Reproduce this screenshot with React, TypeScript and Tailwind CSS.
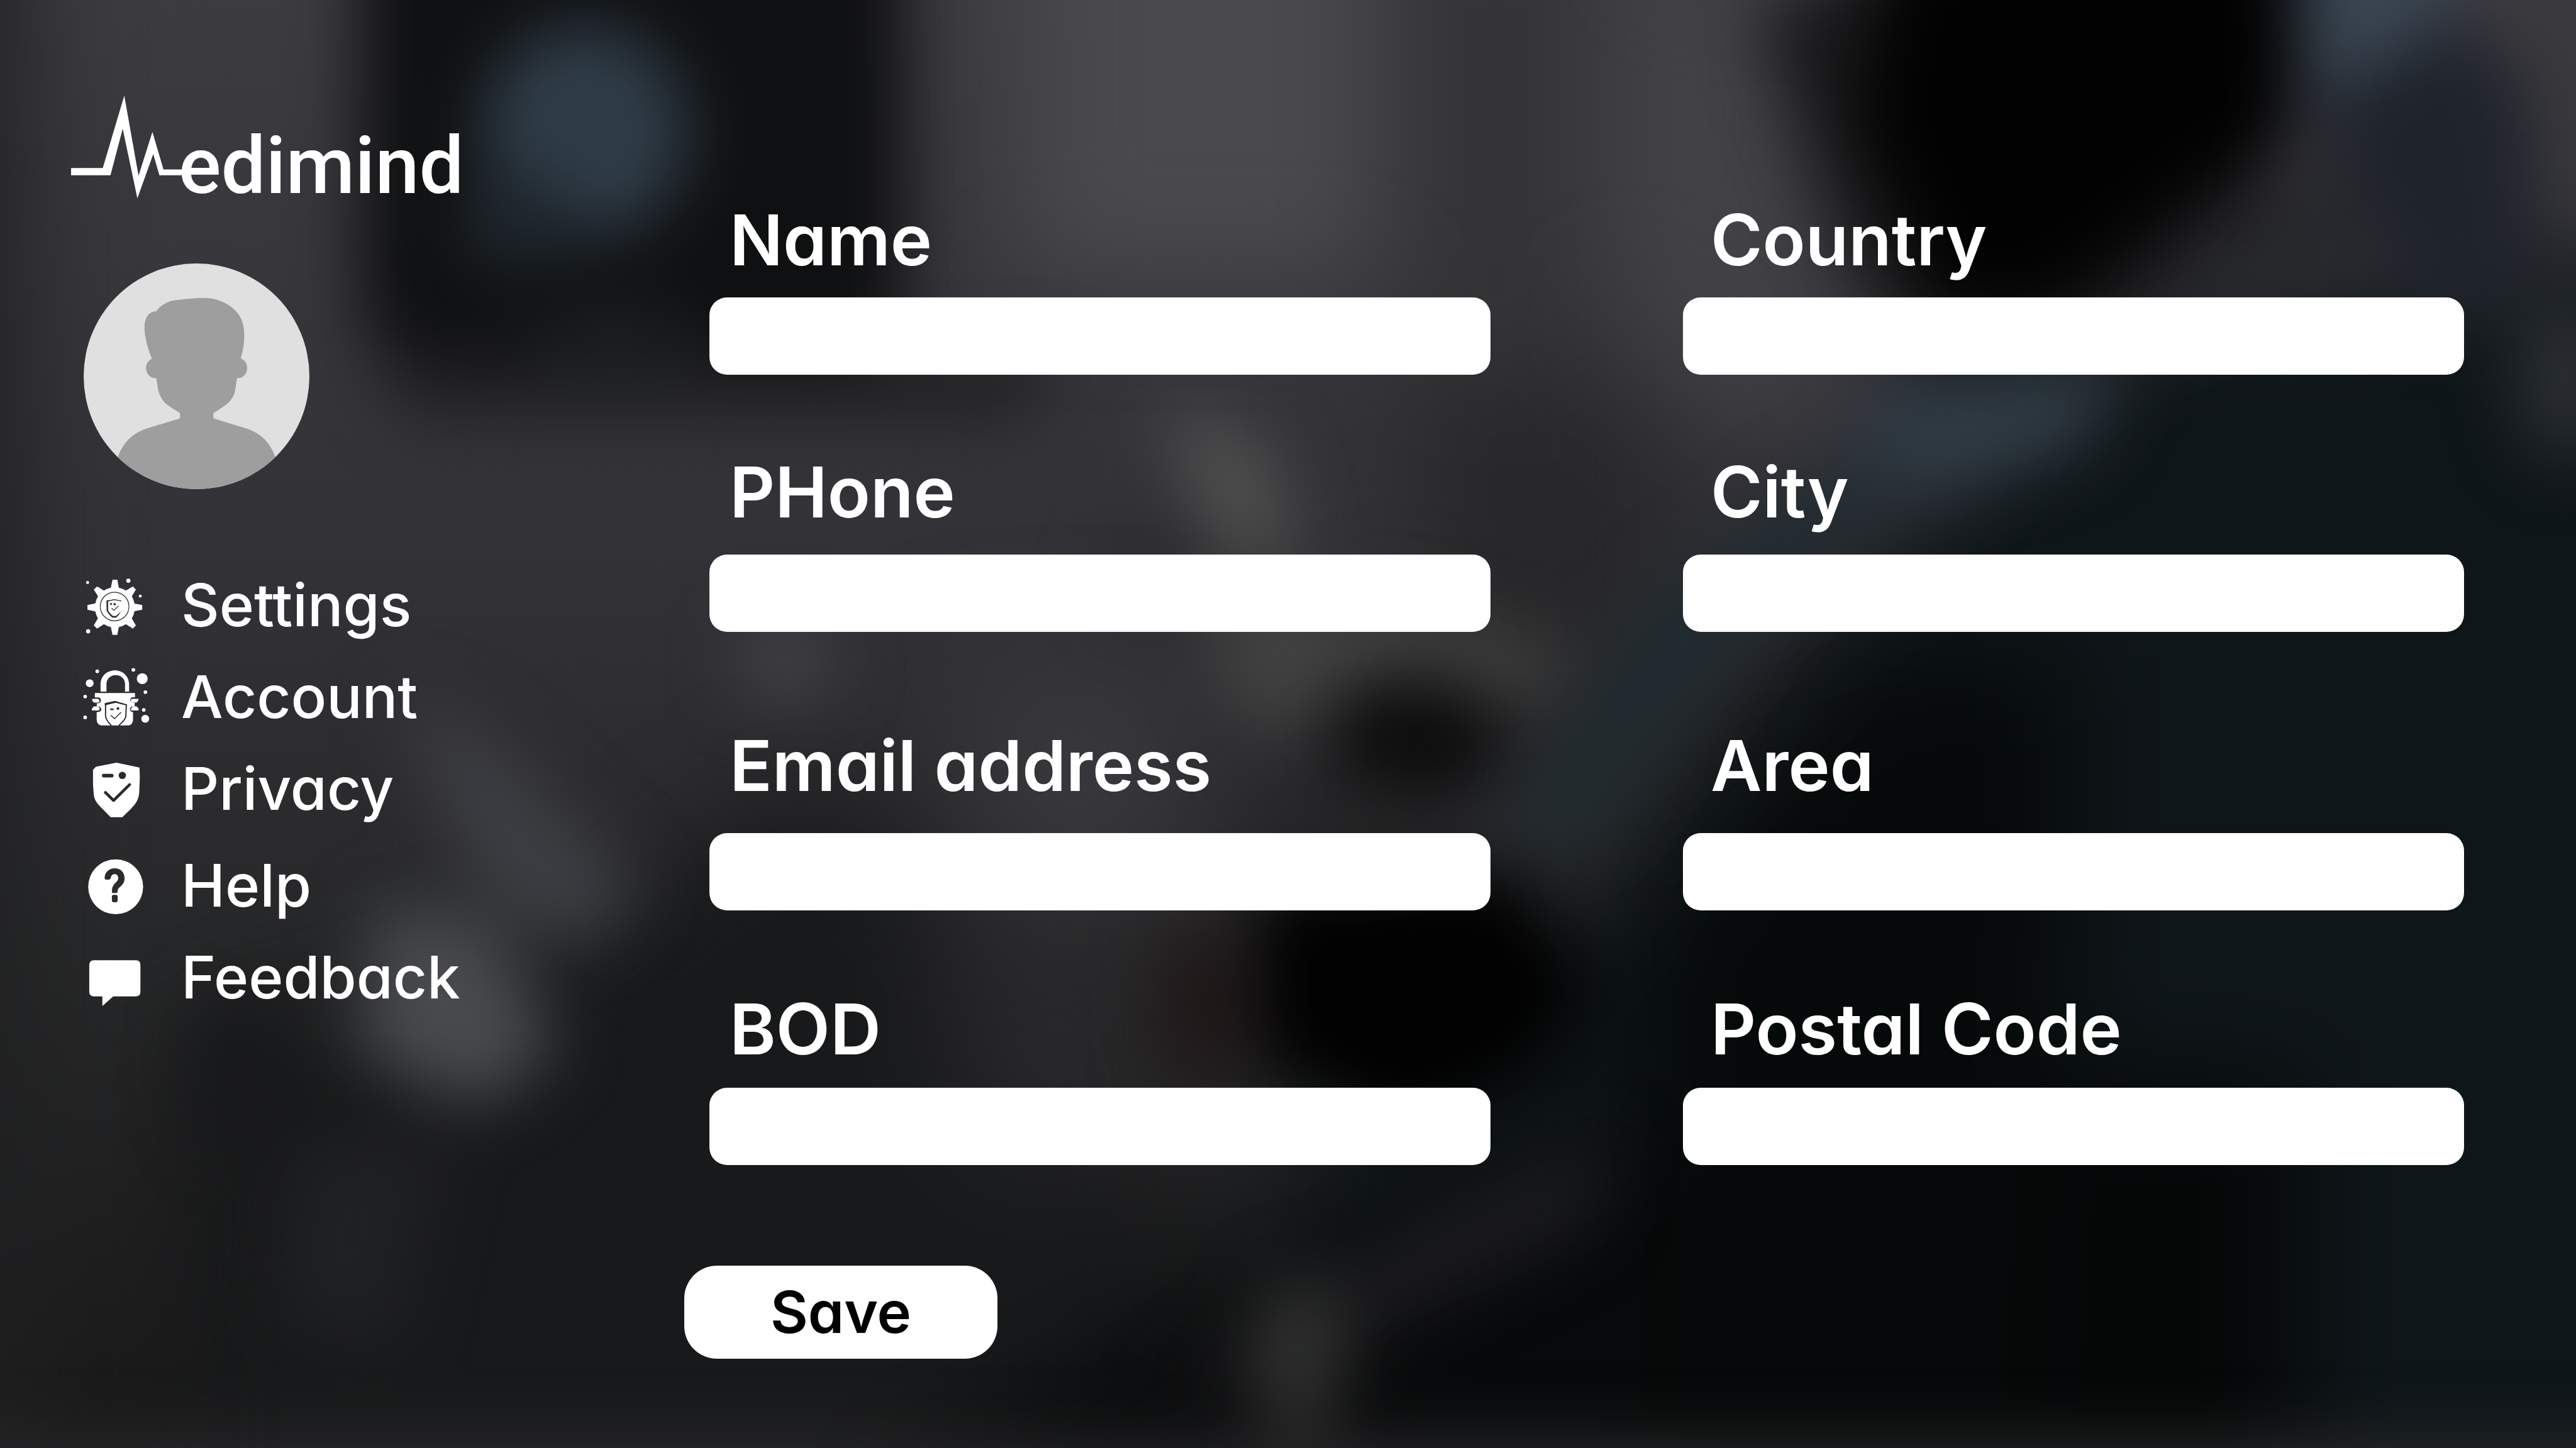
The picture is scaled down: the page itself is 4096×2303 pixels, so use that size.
import type { ReactNode } from "react";

type Field = { id: string; label: string; space: string };

const leftFields: Field[] = [
  { id: "name", label: "Name", space: "gap-7" },
  { id: "phone", label: "PHone", space: "gap-9 mt-[122px]" },
  { id: "email", label: "Email address", space: "gap-11 mt-[148px]" },
  { id: "bod", label: "BOD", space: "gap-[30px] mt-[124px]" },
];

const rightFields: Field[] = [
  { id: "country", label: "Country", space: "gap-7" },
  { id: "city", label: "City", space: "gap-9 mt-[122px]" },
  { id: "area", label: "Area", space: "gap-11 mt-[148px]" },
  { id: "postal", label: "Postal Code", space: "gap-[30px] mt-[124px]" },
];

function Backdrop() {
  return (
    <svg
      className="absolute inset-0 -z-10 h-full w-full"
      viewBox="0 0 1568 882"
      preserveAspectRatio="none"
      aria-hidden="true"
    >
      <defs>
        <linearGradient id="base" x1="0" y1="0" x2="0" y2="1">
          <stop offset="0" stopColor="#3c3b40" />
          <stop offset="0.4" stopColor="#323136" />
          <stop offset="0.65" stopColor="#272829" />
          <stop offset="1" stopColor="#19191a" />
        </linearGradient>
        <filter id="b40" filterUnits="userSpaceOnUse" x="-200" y="-200" width="1968" height="1282" colorInterpolationFilters="sRGB">
          <feGaussianBlur stdDeviation="34" />
        </filter>
        <filter id="b20" filterUnits="userSpaceOnUse" x="-200" y="-200" width="1968" height="1282" colorInterpolationFilters="sRGB">
          <feGaussianBlur stdDeviation="20" />
        </filter>
      </defs>
      <rect width="1568" height="882" fill="url(#base)" />
      <g filter="url(#b40)">
        <rect x="-80" y="-80" width="90" height="1040" fill="#1f2021" />
        <rect x="620" y="-120" width="390" height="290" fill="#4a494d" />
        <rect x="840" y="-60" width="140" height="420" fill="#343437" />
        <rect x="860" y="230" width="160" height="250" fill="#28282a" />
        <path d="M110 640L360 570L480 480L560 520L590 640L720 720V1000H100Z" fill="#18191a" />
        <path d="M580 400H720V540H600Z" fill="#38373b" />
        <path d="M560 560H720V700H600Z" fill="#28282a" />
        <path d="M1290 190L1640 150V1000H760L700 900L800 700L960 560L1080 400Z" fill="#0f1619" />
        <path d="M1020 660H1400V1000H1000Z" fill="#050707" />
        <path d="M1130 400H1260V560L1240 900H1000V580Z" fill="#060909" />
        <rect x="1000" y="-20" width="110" height="270" fill="#424145" />
        <path d="M540 900L760 780L1000 690V1000H540Z" fill="#08090a" />
      </g>
      <g filter="url(#b20)">
        <path d="M220 -60H550V195L500 235H250L220 190Z" fill="#0f1011" />
        <path d="M225 215H650L620 255H250Z" fill="#202022" />
        <ellipse cx="356" cy="80" rx="64" ry="66" fill="#2f3c47" />
        <ellipse cx="315" cy="135" rx="38" ry="30" fill="#1e262c" />
        <ellipse cx="375" cy="205" rx="44" ry="22" fill="#1a1f22" />
        <path d="M1070 10L1160 -40H1400V60L1370 130L1300 220L1180 245L1120 150Z" fill="#19191b" />
        <path d="M1155 -40H1395V80L1340 120L1250 190L1180 190L1130 70Z" fill="#020202" />
        <path d="M1395 -60H1500L1475 60L1405 70Z" fill="#3a4652" />
        <path d="M1410 60L1500 10L1540 60V180L1480 200L1420 110Z" fill="#1f232b" />
        <path d="M1530 -40H1610V170L1560 100Z" fill="#3a3a3d" />
        <path d="M1350 130L1450 100L1430 160L1270 220Z" fill="#26272b" />
        <ellipse cx="1562" cy="230" rx="30" ry="50" fill="#2c2f33" />
        <path d="M1150 230L1290 220L1270 270L1180 300L1120 300Z" fill="#2f3b44" />
        <path d="M1100 290L1180 290L1080 360L970 510L905 520L1000 370Z" fill="#212b30" />
        <path d="M705 245L770 270L790 340L740 330Z" fill="#515150" />
        <path d="M745 340L800 370L860 370L960 400L930 425L820 410L780 450L740 420Z" fill="#424241" />
        <ellipse cx="700" cy="350" rx="26" ry="26" fill="#2a2a2c" />
        <ellipse cx="478" cy="403" rx="30" ry="26" fill="#404146" />
        <ellipse cx="862" cy="450" rx="52" ry="40" fill="#0d0d0e" />
        <ellipse cx="820" cy="500" rx="60" ry="24" fill="#252527" />
        <path d="M765 540L920 530L970 600L940 650L860 690L770 650Z" fill="#010101" />
        <ellipse cx="732" cy="612" rx="30" ry="52" fill="#201819" />
        <path d="M240 420L300 450L390 540L350 580L290 540Z" fill="#3d3e43" />
        <path d="M230 550L300 560L340 640L290 675L215 640Z" fill="#484a4e" />
        <path d="M180 700L270 690L240 820L170 800Z" fill="#202124" />
        <path d="M700 850L860 745L980 690L970 745L800 830Z" fill="#1b1b1e" />
        <ellipse cx="790" cy="825" rx="30" ry="50" fill="#2f302f" />
        <ellipse cx="145" cy="650" rx="26" ry="50" fill="#17181a" />
        <rect x="-40" y="880" width="1660" height="40" fill="#2a2a2c" />
      </g>
    </svg>
  );
}

function Logo() {
  return (
    <div className="flex items-baseline text-white" role="img" aria-label="Medimind">
      <svg className="h-[155px] w-[175px] overflow-visible" viewBox="157 212 243 215" fill="currentColor">
        <path d="M157 372H227L274.500 212L306 389L336.600 292L361 375H408V388H352L338.500 341L303.400 439L271 285L244 388H157Z" />
      </svg>
      <span className="-ml-1 font-['Roboto',sans-serif] text-[126px] font-medium leading-none">edimind</span>
    </div>
  );
}

function Avatar() {
  return (
    <svg
      className="size-[359px] rounded-full bg-[#e0e0e0]"
      viewBox="92 92 1303 1397"
      preserveAspectRatio="none"
      role="img"
      aria-label="Profile picture"
    >
      <path
        fill="#9e9e9e"
        d="M511 388C535 352 573 327 625 319C680 312 730 306 790 306C830 306 860 314 890 328C935 348 967 376 990 414C1012 450 1019 490 1019 545C1019 590 1011 638 998 680C1022 690 1036 711 1036 740C1036 775 1010 805 977 802L968 868C963 903 950 932 921 960C900 978 868 1001 841 1018V1051L1040 1116C1115 1145 1172 1203 1198 1291V1500H290V1291C315 1206 373 1145 448 1116L648 1051V1018C620 1001 598 985 576 968C545 942 527 905 521 868L511 802C478 805 452 775 452 740C452 713 466 692 486 682C462 617 443 548 443 487C443 424 473 388 511 388Z"
      />
    </svg>
  );
}

const dark = "#2b2b2e";

function IconFrame({ box, children }: { box: string; children: ReactNode }) {
  return (
    <svg className="h-[130px] w-36 shrink-0" viewBox={box} fill="white" aria-hidden="true">
      {children}
    </svg>
  );
}

function GearIcon() {
  return (
    <IconFrame box="0 -4 600 540">
      <path d="M262 99H294L304 152Q330 158 351 171L397 144L417 165L390 209Q403 232 408 258L459 267V298L408 308Q403 334 390 356L417 402L397 423L351 394Q330 408 304 413L294 465H262L251 413Q227 408 205 394L160 423L138 402L165 356Q153 334 148 310L96 298V267L148 257Q153 232 166 209L138 165L160 144L205 171Q227 158 251 152Z" />
      <circle cx="276" cy="277" r="95" fill="none" stroke={dark} strokeWidth="5" />
      <path fill={dark} d="M222 237Q250 234 272 228Q298 232 321 238V243Q295 238 272 235Q252 239 233 243V300Q236 315 265 340H284Q303 325 319 309Q309 330 287 350H260Q228 320 223 302Z" />
      <circle cx="252" cy="260" r="7" fill={dark} />
      <circle cx="276" cy="261" r="8" fill={dark} />
      <path d="M256 288L272 302L302 273" fill="none" stroke={dark} strokeWidth="5" />
      <circle cx="97" cy="118" r="10" />
      <circle cx="367" cy="106" r="14" />
      <circle cx="446" cy="208" r="10" />
      <circle cx="101" cy="441" r="14" />
    </IconFrame>
  );
}

function LockIcon() {
  return (
    <IconFrame box="0 21 600 540">
      <path d="M183 258V211C183 155 224 117 278 117C332 117 372 157 372 211V258H345V207C345 173 319 148 284 148C248 148 222 174 222 207V258Z" />
      <path d="M145 267H411V295H393Q381 300 382 318Q384 332 409 332V356Q382 356 378 374Q382 392 398 393V445Q396 475 370 482H188Q160 478 157 445V393Q187 390 187 373Q184 356 158 356V332Q184 332 184 314Q183 298 168 296H145Z" />
      <path d="M127 306H168Q180 316 174 331H140Q126 322 127 306ZM125 383Q124 366 140 356H174Q182 372 172 383ZM435 306H384Q379 318 388 331H421Q434 322 435 306ZM435 383Q436 364 421 356H396Q382 365 384 383Z" />
      <path d="M168 297Q186 306 183 321Q178 332 160 333M170 358Q185 365 185 378Q182 390 162 391M382 318Q381 302 394 297M394 357Q378 367 380 378Q384 388 394 391" fill="none" stroke={dark} strokeWidth="5" />
      <path d="M254 482Q218 446 216 420V338L280 325L354 345L350 425Q344 445 304 482" fill="none" stroke={dark} strokeWidth="8" />
      <path d="M211 334L280 319L358 345L324 342L284 332L235 343L211 350Z" fill={dark} />
      <path d="M245 369L272 371Q271 381 263 381H253Q246 378 245 369Z" fill={dark} />
      <circle cx="298" cy="370" r="9" fill={dark} />
      <path d="M250 414L275 437L319 394" fill="none" stroke={dark} strokeWidth="6" />
      <circle cx="161" cy="123" r="12" />
      <circle cx="111" cy="202" r="26" />
      <circle cx="400" cy="113" r="12" />
      <circle cx="459" cy="172" r="36" />
      <circle cx="480" cy="261" r="12" />
      <circle cx="469" cy="379" r="12" />
      <circle cx="479" cy="438" r="26" />
      <circle cx="81" cy="290" r="12" />
      <circle cx="81" cy="428" r="12" />
    </IconFrame>
  );
}

function ShieldIcon() {
  return (
    <IconFrame box="0 4 600 540">
      <path d="M152 130L288 103L441 135L443 200C442 240 440 270 439 303C434 345 423 368 385 408L327 465H250L178 392C148 360 138 335 137 303L133 250V150Z" />
      <g fill="none" stroke={dark} strokeLinecap="round">
        <path d="M204 189H257" strokeWidth="24" />
        <path d="M215 301L269 354L375 249" strokeWidth="19" strokeLinejoin="round" />
      </g>
      <circle cx="327" cy="188" r="24" fill={dark} />
    </IconFrame>
  );
}

function HelpIcon() {
  return (
    <IconFrame box="0 -4 600 540">
      <circle cx="283" cy="276" r="182" />
      <path fill={dark} d="M210 218C210 180 238 153 277 153C316 153 342 180 342 219C342 246 330 262 309 280C299 289 296 294 296 304Q296 317 288 317H260Q256 313 259 306V291C261 272 272 260 286 245C295 236 300 230 300 219C300 203 291 192 277 192C262 192 252 202 251 216Q248 228 240 228H218Q210 227 210 218Z" />
      <rect x="258" y="330" width="38" height="48" rx="12" fill={dark} />
    </IconFrame>
  );
}

function ChatIcon() {
  return (
    <IconFrame box="0 -36 600 540">
      <path d="M137 123H418Q447 125 447 152V334Q446 360 418 362H267L195 426V362H137Q109 360 108 334V152Q110 125 137 123Z" />
    </IconFrame>
  );
}

const nav = [
  { label: "Settings", icon: <GearIcon />, space: "" },
  { label: "Account", icon: <LockIcon />, space: "" },
  { label: "Privacy", icon: <ShieldIcon />, space: "" },
  { label: "Help", icon: <HelpIcon />, space: "mt-2" },
  { label: "Feedback", icon: <ChatIcon />, space: "" },
];

function FieldColumn({ fields, labelPad }: { fields: Field[]; labelPad: string }) {
  return (
    <div className={`flex flex-col ${labelPad}`}>
      {fields.map((field) => (
        <div key={field.id} className={`flex flex-col ${field.space}`}>
          <label htmlFor={field.id} className="text-[112px] font-semibold leading-[128px]">
            {field.label}
          </label>
          <input
            id={field.id}
            name={field.id}
            type="text"
            className="h-[123px] w-full rounded-[28px] bg-white px-10 text-[64px] text-black outline-none"
          />
        </div>
      ))}
    </div>
  );
}

export default function App() {
  return (
    <div className="relative isolate flex min-h-screen overflow-hidden bg-[#1d1d1f] font-['Inter',sans-serif] text-white [font-feature-settings:'cv11']">
      <Backdrop />
      <aside className="w-[1128px] shrink-0 pl-[113px] pt-[152px]">
        <Logo />
        <div className="mt-[92px] pl-5">
          <Avatar />
        </div>
        <nav className="mt-[119px] flex flex-col gap-4 pl-[3px]">
          {nav.map((item) => (
            <a key={item.label} href="#" className={`flex items-center gap-7 ${item.space}`}>
              {item.icon}
              <span className="text-[94px] font-medium leading-[130px]">{item.label}</span>
            </a>
          ))}
        </nav>
      </aside>
      <main className="flex-1 pr-[178px] pt-[317px]">
        <form onSubmit={(event) => event.preventDefault()}>
          <div className="grid grid-cols-2 gap-[306px]">
            <FieldColumn fields={leftFields} labelPad="[&_label]:pl-8" />
            <FieldColumn fields={rightFields} labelPad="[&_label]:pl-11" />
          </div>
          <button
            type="submit"
            className="-ml-10 mt-40 h-[148px] w-[498px] rounded-[52px] bg-white text-[92px] font-semibold text-black"
          >
            Save
          </button>
        </form>
      </main>
    </div>
  );
}
